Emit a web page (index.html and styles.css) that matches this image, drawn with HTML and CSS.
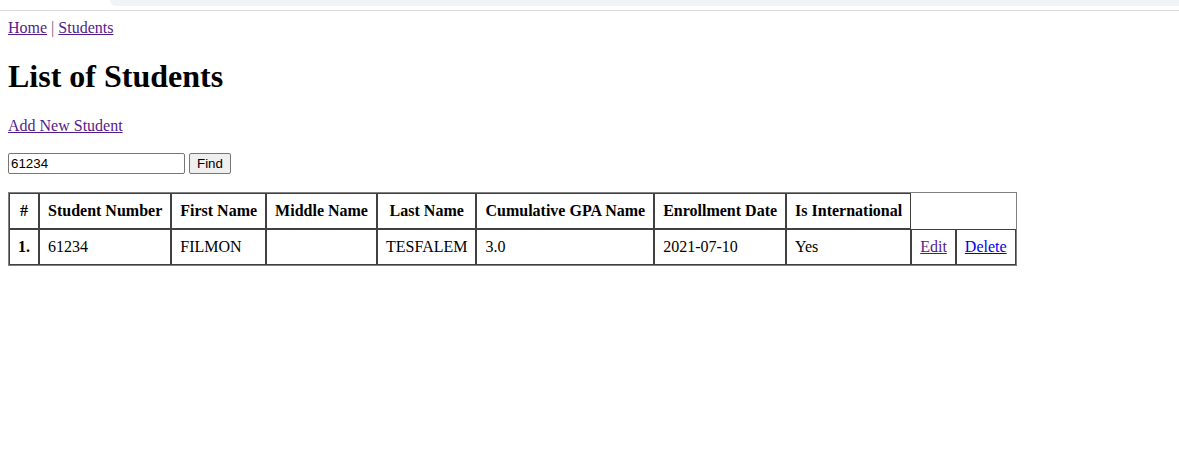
FILE: index.html
```html
<!DOCTYPE html>
<html>
<head>
<meta charset="utf-8">
<title>List of Students</title>
<link rel="stylesheet" href="styles.css">
</head>
<body>
<div class="chrome"><div class="chrome-bar"></div></div>
<div class="page">
  <div class="nav"><a class="visited" href="#">Home</a> | <a class="visited" href="#">Students</a></div>
  <h1 class="title">List of Students</h1>
  <p class="para"><a class="visited" href="#">Add New Student</a></p>
  <form class="para search">
    <input class="search-input" type="text" value="61234"> <button class="search-btn" type="button">Find</button>
  </form>
  <table class="grid">
    <tr>
      <th>#</th>
      <th>Student Number</th>
      <th>First Name</th>
      <th>Middle Name</th>
      <th>Last Name</th>
      <th>Cumulative GPA Name</th>
      <th>Enrollment Date</th>
      <th>Is International</th>
    </tr>
    <tr>
      <th>1.</th>
      <td>61234</td>
      <td>FILMON</td>
      <td></td>
      <td>TESFALEM</td>
      <td>3.0</td>
      <td>2021-07-10</td>
      <td>Yes</td>
      <td><a class="visited" href="#">Edit</a></td>
      <td><a class="fresh" href="#">Delete</a></td>
    </tr>
  </table>
</div>
</body>
</html>
```
FILE: styles.css
```css
html, body {
  margin: 0;
  padding: 0;
  background: #fff;
}
body {
  font-family: "Liberation Serif", "Times New Roman", serif;
  font-size: 16px;
  color: #000;
}
.chrome {
  height: 10px;
  border-bottom: 1px solid #dcdcdc;
  overflow: hidden;
}
.chrome-bar {
  margin-left: 110px;
  height: 6px;
  background: #f1f3f4;
  border-bottom-left-radius: 14px;
}
.page {
  margin: 8px;
}
.nav {
  color: #6a5a7a;
}
a.visited {
  color: #551a8b;
}
a.fresh {
  color: #0000ee;
}
.title {
  font-size: 32px;
  font-weight: bold;
  margin: 21.44px 0;
}
.para {
  margin: 16px 0;
}
.search {
  line-height: 18px;
}
.search-input {
  font-family: Arial, "Liberation Sans", sans-serif;
  font-size: 13.33px;
  width: 177px;
  height: 21px;
  box-sizing: border-box;
  padding: 1px 2px;
  border: 1px solid #767676;
  border-radius: 2px;
  margin: 2px 0;
  vertical-align: top;
}
.search-btn {
  font-family: Arial, "Liberation Sans", sans-serif;
  font-size: 13.33px;
  height: 21px;
  padding: 1px 7px;
  border: 1px solid #767676;
  border-radius: 2px;
  background: #efefef;
  color: #000;
  margin: 2px 0;
  vertical-align: top;
}
.grid {
  border: 1px solid #808080;
  border-spacing: 0;
  border-collapse: separate;
}
.grid th, .grid td {
  border: 1px solid #404040;
  padding: 8px;
  white-space: nowrap;
}
.grid td {
  text-align: left;
}
```
